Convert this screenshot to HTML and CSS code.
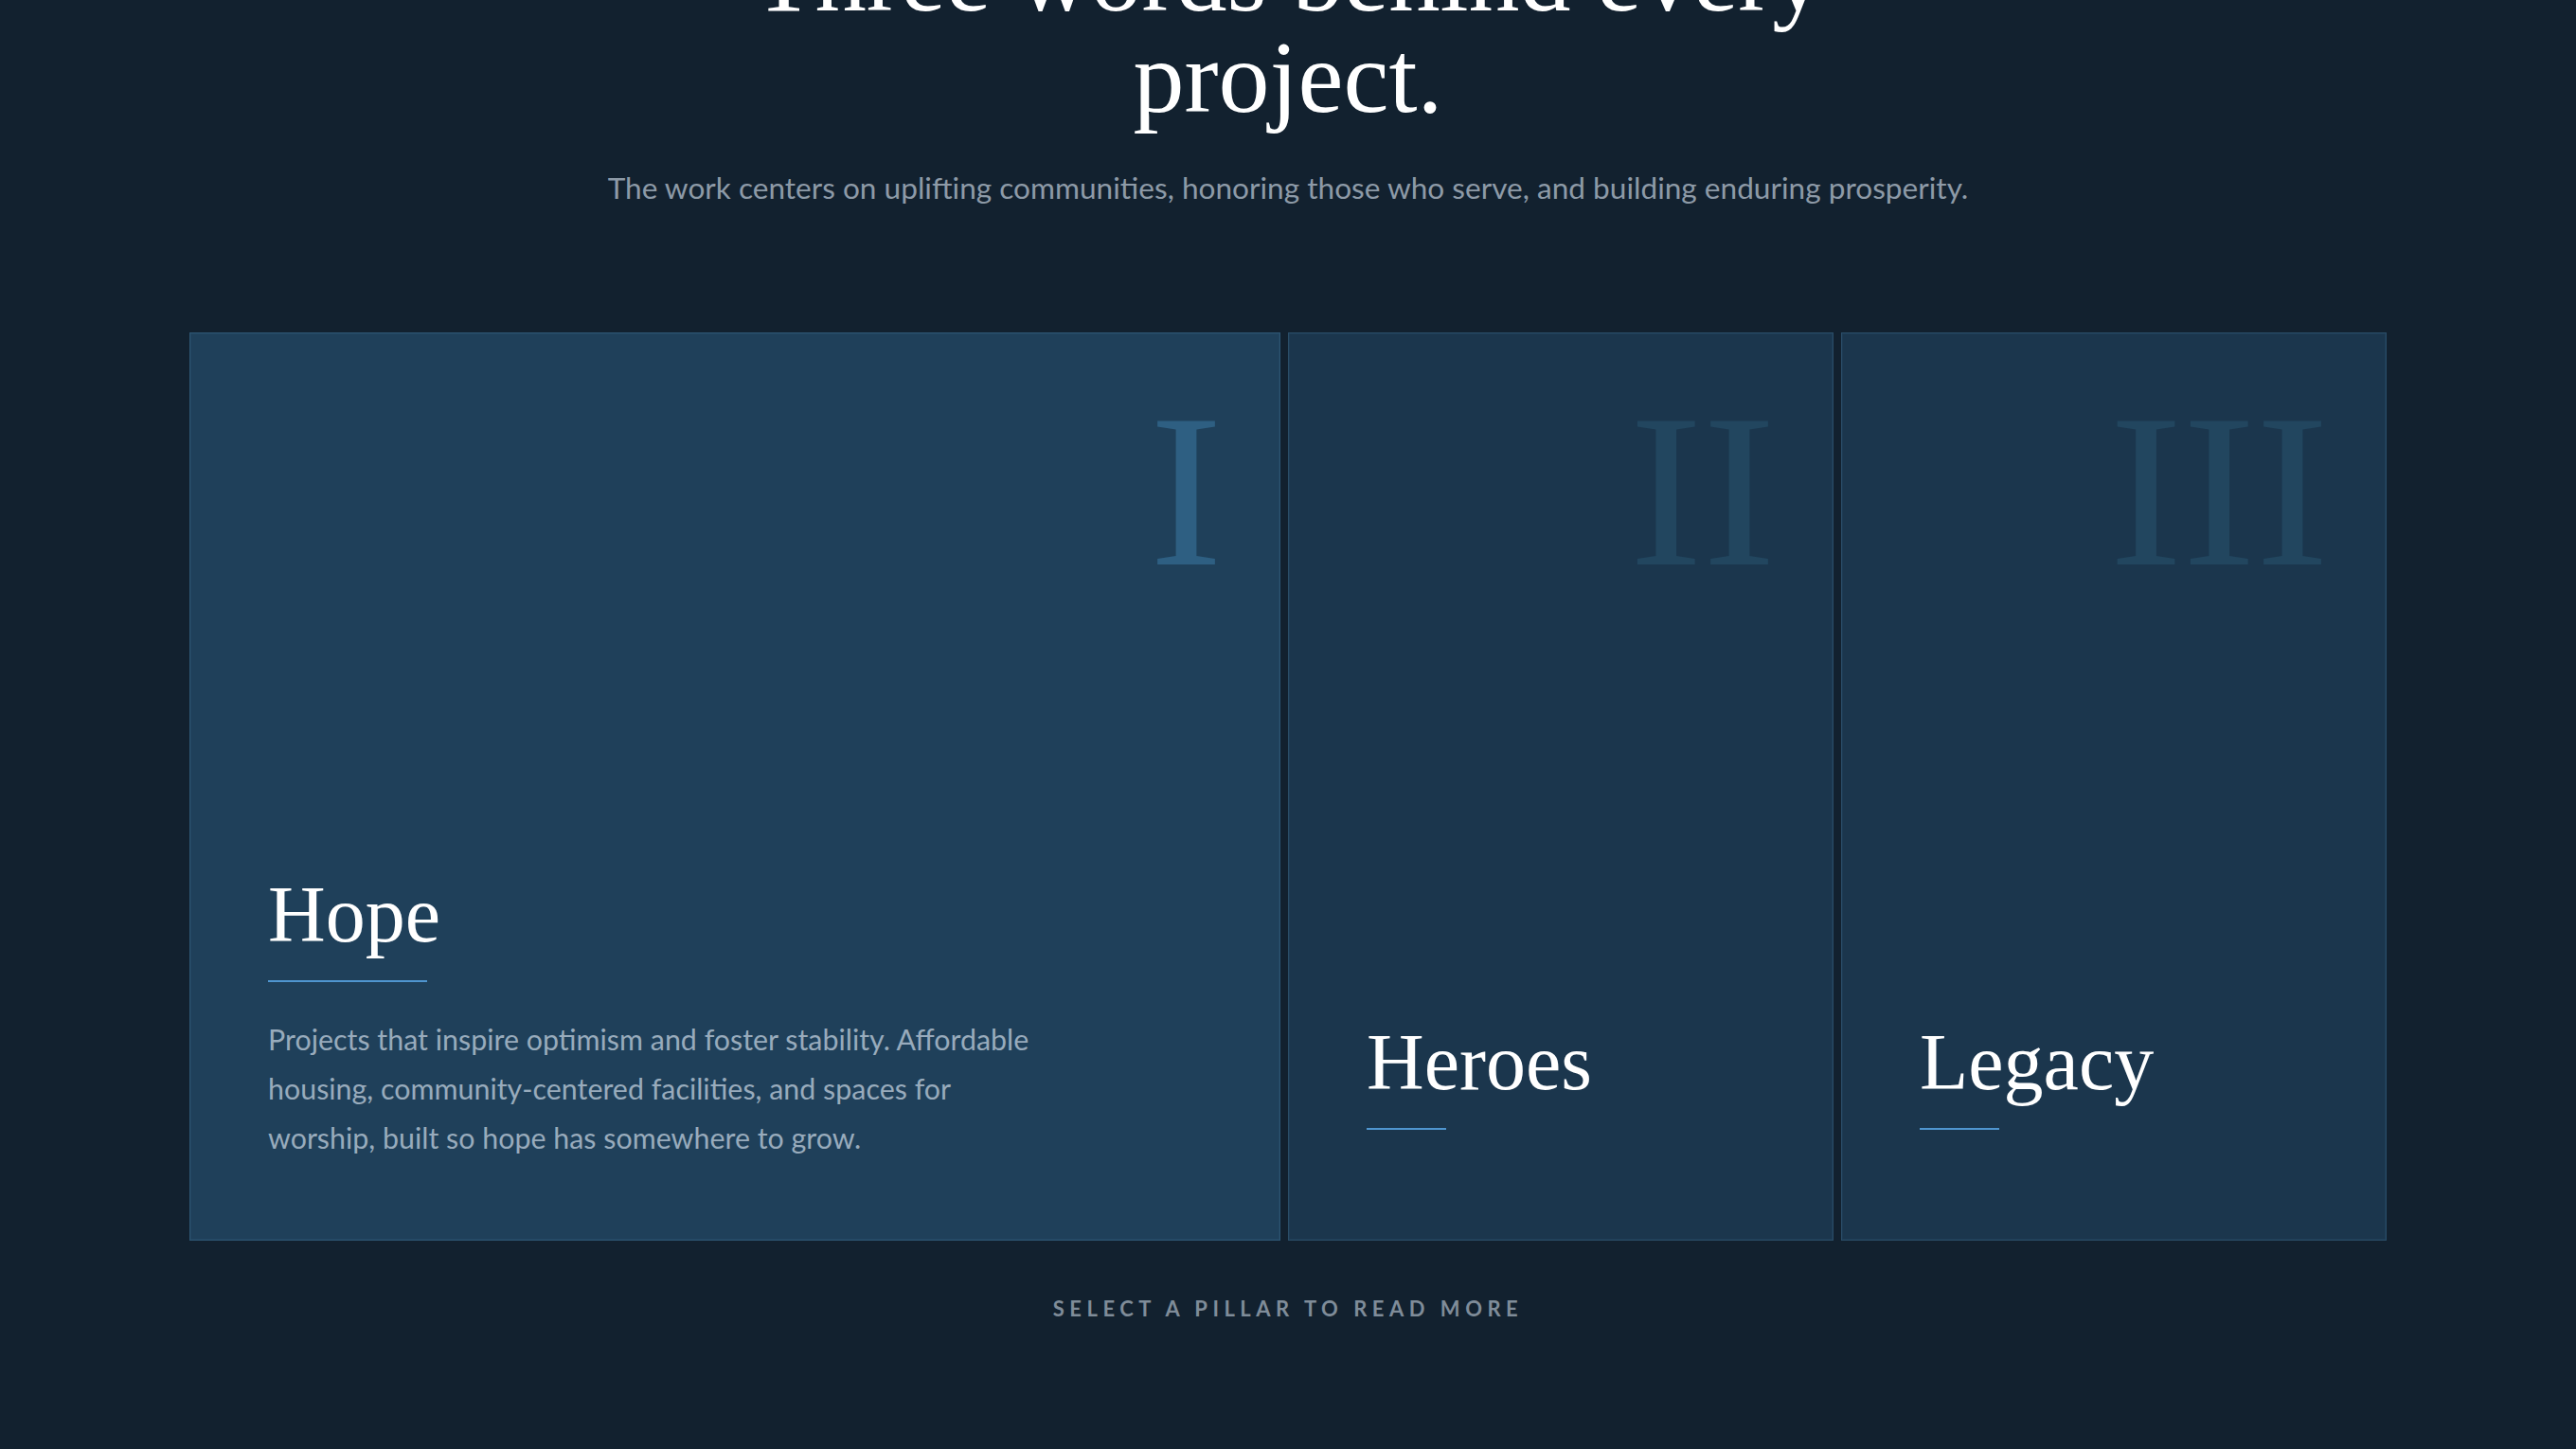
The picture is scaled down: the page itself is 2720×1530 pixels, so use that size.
FILE: index.html
```html
<!DOCTYPE html>
<html>
<head>
  <title>Three words behind every project</title>
  <link rel="stylesheet" href="styles.css">
</head>
<body>

<section class="pillars">

  <!-- Section heading -->
  <header class="pillars-head">
    <h2 class="pillars-title">Three words behind every project.</h2>
    <p class="pillars-lede">The work centers on uplifting communities, honoring those who serve, and building enduring prosperity.</p>
  </header>

  <!-- The three pillars, first one open -->
  <div class="pillar-row">
    <article class="pillar is-open">
      <span class="pillar-num">I</span>
      <h3 class="pillar-name">Hope</h3>
      <span class="pillar-rule"></span>
      <p class="pillar-text">Projects that inspire optimism and foster stability. Affordable housing, community-centered facilities, and spaces for worship, built so hope has somewhere to grow.</p>
    </article>

    <article class="pillar">
      <span class="pillar-num">II</span>
      <h3 class="pillar-name">Heroes</h3>
      <span class="pillar-rule"></span>
      <p class="pillar-text">Work that honors those who serve: first responders, veterans and the people who keep a city running.</p>
    </article>

    <article class="pillar">
      <span class="pillar-num">III</span>
      <h3 class="pillar-name">Legacy</h3>
      <span class="pillar-rule"></span>
      <p class="pillar-text">Building enduring prosperity that outlasts a single project and carries on for the next generation.</p>
    </article>
  </div>

  <p class="pillar-hint">Select a pillar to read more</p>

</section>

</body>
</html>
```

FILE: styles.css
```css
body {
  margin: 0;
  background-color: #12212f;
  color: #ffffff;
  font-family: Lato, "Open Sans", sans-serif;
}

.pillars {
  padding: 0 200px 120px;
}

.pillars-head {
  text-align: center;
  margin-top: -79px;
}

.pillars-title {
  max-width: 1200px;
  margin: 0 auto;
  font-family: "Liberation Serif", "Times New Roman", serif;
  font-weight: 400;
  font-size: 108px;
  line-height: 107px;
  color: #ffffff;
}

.pillars-lede {
  margin: 39px 0 0;
  font-size: 31.6px;
  line-height: 48px;
  color: #8d9aa7;
}

/* cards: the open pillar takes twice the room */
.pillar-row {
  display: grid;
  grid-template-columns: 2fr 1fr 1fr;
  gap: 8px;
  height: 959px;
  margin-top: 129px;
}

.pillar {
  position: relative;
  min-width: 0;
  display: flex;
  flex-direction: column;
  justify-content: flex-end;
  align-items: flex-start;
  padding: 82px;
  border: 1px solid #2a4d68;
  background-color: #1b364d;
  box-shadow: inset 0 0 0 1px rgba(60, 110, 150, 0.12);
  cursor: pointer;
}

.pillar.is-open {
  background-color: #1f405a;
  border-color: #2d5673;
}

.pillar-num {
  position: absolute;
  top: 50px;
  right: 60px;
  font-family: "Liberation Serif", "Times New Roman", serif;
  font-size: 232px;
  line-height: 1;
  color: #22465f;
}

.pillar.is-open .pillar-num {
  color: #2e5f82;
}

.pillar-name {
  margin: 0 0 23px;
  font-family: "Liberation Serif", "Times New Roman", serif;
  font-weight: 400;
  font-size: 84px;
  line-height: 1.1;
  color: #ffffff;
}

.pillar-rule {
  display: block;
  width: 84px;
  height: 2px;
  margin-bottom: 34px;
  background-color: #4f95cf;
}

.pillar.is-open .pillar-rule {
  width: 168px;
}

.pillar-text {
  display: none;
  max-width: 820px;
  margin: 0;
  font-size: 30.4px;
  line-height: 52px;
  color: #98abbc;
}

.pillar.is-open .pillar-text {
  display: block;
}

.pillar-hint {
  margin: 58px 0 0;
  text-align: center;
  font-size: 22px;
  font-weight: 700;
  letter-spacing: 0.25em;
  text-transform: uppercase;
  color: #7f8c99;
}
```
